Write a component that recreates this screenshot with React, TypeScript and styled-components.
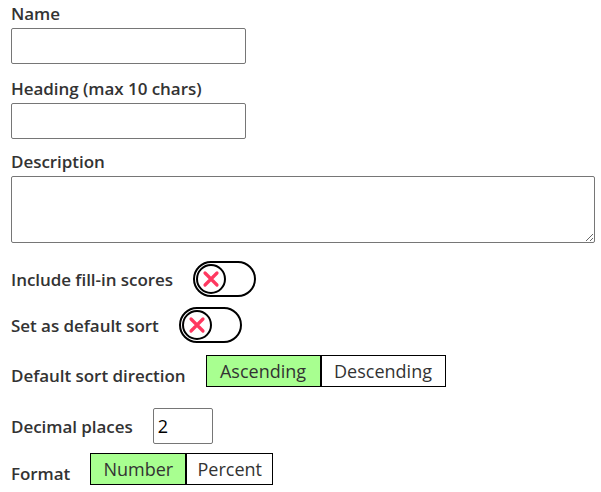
import React from "react";
import styled, { createGlobalStyle } from "styled-components";

const Global = createGlobalStyle`
  html, body { margin: 0; padding: 0; background: #fff; }
  body { font-family: "Open Sans", "Noto Sans", sans-serif; color: #333; }
  * { box-sizing: border-box; }
`;

const Form = styled.div`
  padding: 2px 11px 0 11px;
  display: flex;
  flex-direction: column;
`;

const Field = styled.div<{ $mb?: number }>`
  display: flex;
  flex-direction: column;
  margin-bottom: ${(p) => p.$mb ?? 12}px;
`;

const Label = styled.label`
  font-size: 17px;
  font-weight: 600;
  line-height: 23px;
  color: #333;
  margin-bottom: 3px;
  letter-spacing: -0.05px;
`;

const RowLabel = styled(Label)`
  margin-bottom: 0;
  white-space: nowrap;
`;

const TextInput = styled.input<{ $w: number; $pl?: number }>`
  width: ${(p) => p.$w}px;
  height: 36px;
  border: 1px solid #767676;
  border-radius: 2px;
  padding: 2px 8px 2px ${(p) => p.$pl ?? 8}px;
  font-family: "Open Sans", sans-serif;
  font-size: 18px;
  color: #000;
  background: #fff;
  outline: none;
`;

const TextArea = styled.textarea`
  width: 584px;
  height: 67px;
  border: 1px solid #767676;
  border-radius: 2px;
  font-family: "Open Sans", sans-serif;
  font-size: 15px;
  resize: both;
  outline: none;
  display: block;
`;

const Row = styled.div<{ $gap: number; $mb: number; $align?: string }>`
  display: flex;
  align-items: ${(p) => p.$align ?? "center"};
  gap: ${(p) => p.$gap}px;
  margin-bottom: ${(p) => p.$mb}px;
`;

const Toggle = styled.button`
  width: 63px;
  height: 36px;
  border: 2px solid #000;
  border-radius: 18px;
  background: #fff;
  padding: 0 0 0 1px;
  display: flex;
  align-items: center;
  cursor: pointer;
`;

const Knob = styled.span`
  width: 30px;
  height: 30px;
  border: 2px solid #000;
  border-radius: 50%;
  display: flex;
  align-items: center;
  justify-content: center;
  background: #fff;
`;

const Group = styled.div`
  display: flex;
`;

const SegButton = styled.button<{ $active?: boolean; $w: number }>`
  width: ${(p) => p.$w}px;
  height: 32px;
  border: 1px solid #000;
  background: ${(p) => (p.$active ? "#a8ff90" : "#fff")};
  font-family: "Open Sans", sans-serif;
  font-size: 18px;
  color: #333;
  padding: 0;
  line-height: 28px;
  cursor: pointer;
`;

const Cross = () => (
  <svg width="18" height="18" viewBox="0 0 18 18">
    <path d="M3 3 L15 15 M15 3 L3 15" stroke="#ff3860" strokeWidth="3.2" strokeLinecap="round" />
  </svg>
);

export default function App() {
  return (
    <>
      <Global />
      <Form>
        <Field $mb={13}>
          <Label>Name</Label>
          <TextInput $w={235} />
        </Field>
        <Field $mb={11}>
          <Label>Heading (max 10 chars)</Label>
          <TextInput $w={235} />
        </Field>
        <Field $mb={18}>
          <Label>Description</Label>
          <TextArea />
        </Field>
        <Row $gap={20} $mb={10}>
          <RowLabel>Include fill-in scores</RowLabel>
          <Toggle>
            <Knob>
              <Cross />
            </Knob>
          </Toggle>
        </Row>
        <Row $gap={20} $mb={12}>
          <RowLabel>Set as default sort</RowLabel>
          <Toggle>
            <Knob>
              <Cross />
            </Knob>
          </Toggle>
        </Row>
        <Row $gap={20} $mb={21} $align="flex-end">
          <RowLabel>Default sort direction</RowLabel>
          <Group>
            <SegButton $active $w={115}>Ascending</SegButton>
            <SegButton $w={125}>Descending</SegButton>
          </Group>
        </Row>
        <Row $gap={20} $mb={9}>
          <RowLabel>Decimal places</RowLabel>
          <TextInput $w={60} $pl={4} defaultValue="2" />
        </Row>
        <Row $gap={20} $mb={0} $align="flex-end">
          <RowLabel>Format</RowLabel>
          <Group>
            <SegButton $active $w={96}>Number</SegButton>
            <SegButton $w={87}>Percent</SegButton>
          </Group>
        </Row>
      </Form>
    </>
  );
}
